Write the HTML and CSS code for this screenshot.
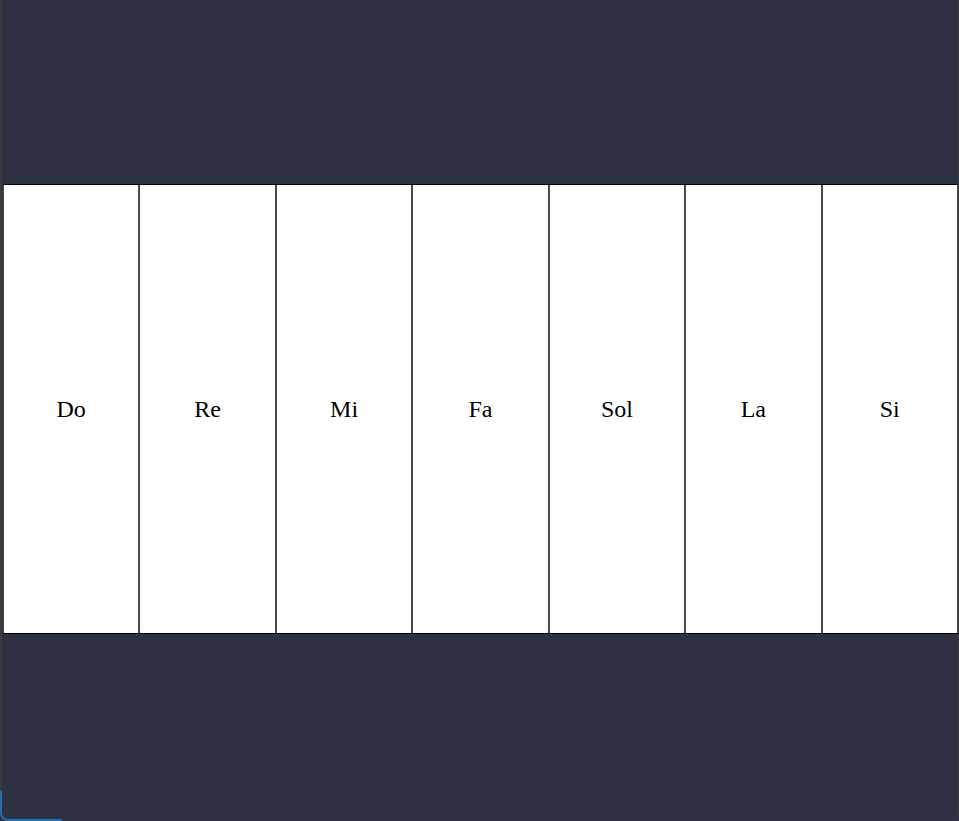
FILE: index.html
```html
<!DOCTYPE html>
<html>
<head>
<meta charset="utf-8">
<link rel="stylesheet" href="styles.css">
</head>
<body>
<div class="frame">
  <div class="piano">
    <div class="key">Do</div>
    <div class="key">Re</div>
    <div class="key">Mi</div>
    <div class="key">Fa</div>
    <div class="key">Sol</div>
    <div class="key">La</div>
    <div class="key">Si</div>
  </div>
  <div class="corner"></div>
</div>
</body>
</html>
```
FILE: styles.css
```css
html, body {
  margin: 0;
  padding: 0;
  background: #2e3142;
}
.frame {
  position: relative;
  height: 821px;
  box-sizing: border-box;
  border-left: 2px solid #3b3b3e;
  border-right: 1px solid #3b3b3e;
  padding-top: 184px;
  padding-left: 1px;
  background: #2e3142;
  border-bottom-left-radius: 8px;
  border-bottom-right-radius: 8px;
}
.piano {
  display: flex;
  height: 450px;
  box-sizing: border-box;
  border-top: 1px solid #000;
  border-bottom: 1px solid #000;
}
.key {
  flex: 1;
  background: #fff;
  border-left: 1px solid #4a4a4a;
  border-right: 1px solid #4a4a4a;
  display: flex;
  align-items: center;
  justify-content: center;
  font-family: "Liberation Serif", "Times New Roman", serif;
  font-size: 24px;
  color: #000;
}
.corner {
  position: absolute;
  left: -2px;
  bottom: 0;
  width: 62px;
  height: 30px;
  border-left: 2px solid #1f6fb3;
  border-bottom: 2px solid #1f6fb3;
  border-bottom-left-radius: 8px;
  box-sizing: border-box;
}
```
